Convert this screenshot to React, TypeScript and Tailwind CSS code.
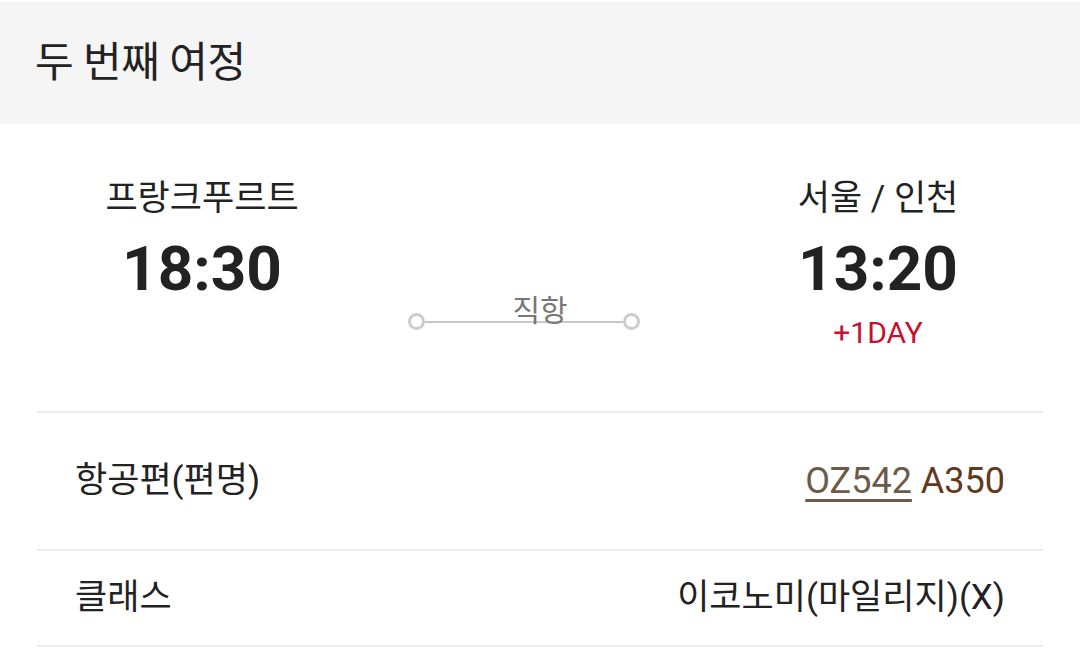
export default function App() {
  const font = { fontFamily: 'Roboto, "Noto Sans CJK KR", sans-serif' };

  return (
    <div className="min-h-[657px] w-[1080px] bg-white pt-[2px] text-[#222]" style={font}>
      <header className="flex h-[122px] items-center bg-[#f5f5f5] px-[35px]">
        <h2 className="text-[42px] leading-none font-normal tracking-[-0.5px]">두 번째 여정</h2>
      </header>

      <section className="px-[37px]">
        <div className="flex pt-[54px] pb-[61px]">
          <div className="flex w-[330px] flex-col items-center">
            <span className="text-[35px] leading-[42px]">프랑크푸르트</span>
            <span className="mt-[14px] text-[62px] leading-[70px] font-bold">18:30</span>
          </div>

          <div className="relative flex flex-1 justify-center pt-[115px]">
            <div className="-ml-[32px] flex w-[232px] items-center">
              <span className="h-[17px] w-[17px] rounded-full border-[3px] border-[#cccccc] bg-white" />
              <span className="h-[2px] flex-1 bg-[#c8c8c8]" />
              <span className="h-[17px] w-[17px] rounded-full border-[3px] border-[#cccccc] bg-white" />
            </div>
            <span className="absolute top-[115px] left-1/2 -translate-x-1/2 text-[30px] leading-[36px] text-[#777]">
              직항
            </span>
          </div>

          <div className="flex w-[330px] flex-col items-center">
            <span className="text-[35px] leading-[42px]">서울 / 인천</span>
            <span className="mt-[14px] text-[62px] leading-[70px] font-bold">13:20</span>
            <span className="mt-[12px] text-[30px] leading-[34px] text-[#c8102e]">+1DAY</span>
          </div>
        </div>

        <div className="h-[2px] bg-[#ececec]" />
        <div className="flex h-[136px] items-center justify-between px-[38px] text-[35px]">
          <span>항공편(편명)</span>
          <span className="text-[36px]">
            <span className="text-[#6e5a48] underline decoration-[3px] underline-offset-[6px]">OZ542</span>{" "}
            <span className="text-[#62391a]">A350</span>
          </span>
        </div>
        <div className="h-[2px] bg-[#ececec]" />
        <div className="flex h-[94px] items-center justify-between px-[38px] text-[35px]">
          <span>클래스</span>
          <span>이코노미(마일리지)(X)</span>
        </div>
        <div className="h-[2px] bg-[#ececec]" />
      </section>
    </div>
  );
}
